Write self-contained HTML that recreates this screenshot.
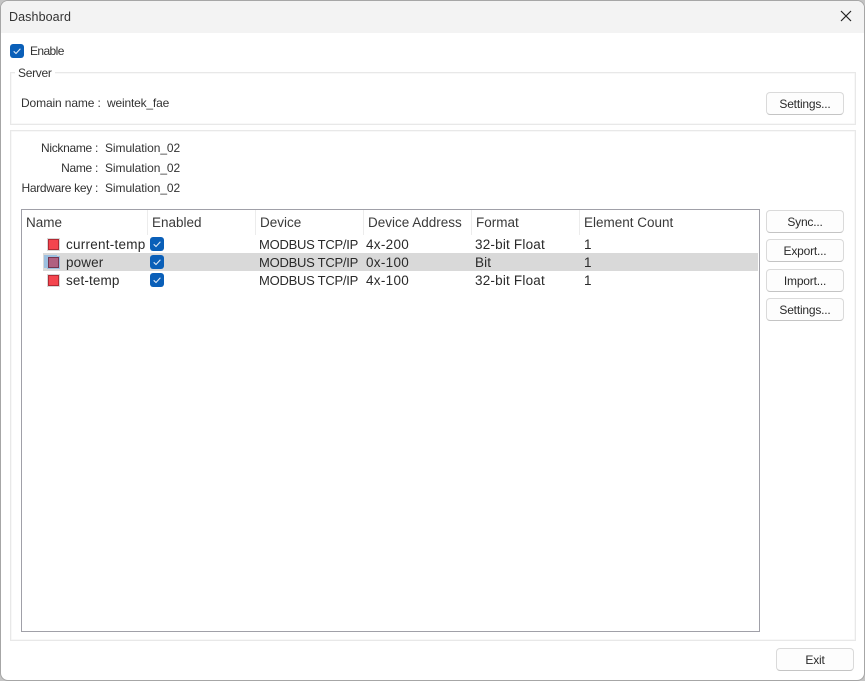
<!DOCTYPE html>
<html><head><meta charset="utf-8"><style>
html,body{margin:0;padding:0;width:865px;height:681px;overflow:hidden;background:#c4c4c4}
body{position:relative;font-family:"Liberation Sans",sans-serif;color:#222}
div,span{position:absolute;box-sizing:border-box}
#win{left:0;top:0;width:865px;height:681px;background:#fff;border:1px solid #a6a6a6;border-radius:8px;overflow:hidden}
#title{left:0;top:0;width:863px;height:32px;background:#f3f3f3}
.t{white-space:nowrap;font-size:12px;line-height:16px;height:16px;color:#333}
.l{letter-spacing:-.3px}
.c{white-space:nowrap;font-size:13.5px;line-height:18px;height:18px;color:#2a2a2a}
.r{letter-spacing:.12px}
.m{font-size:13px;letter-spacing:-.25px}
.h{color:#3a3a3a}
.grp{border:1px solid #e8e8e8;box-shadow:inset 0 0 0 .5px #f2f2f2}
.btn{width:78px;height:23px;background:#fdfdfd;border:1px solid #dadada;border-bottom-color:#c4c4c4;border-radius:4px;font-size:12px;letter-spacing:-.2px;line-height:22px;text-align:center;color:#2a2a2a}
.cb{width:14px;height:14px;background:#0a5fb8;border-radius:3px}
.cb svg{position:absolute;left:0;top:0}
.sep{width:1px;top:210px;height:25px;background:#ececec}
.ic{left:48px;width:11px;height:11px;background:#f4454e;border:1px solid #b02a34;box-shadow:0 0 0 1px #d8d8d8}
</style></head><body>
<div id="win"><div id="title"></div></div>
<div class="t" style="left:9px;top:9px;font-size:12.5px;letter-spacing:.1px">Dashboard</div>
<svg style="position:absolute;left:840px;top:10px" width="12" height="12" viewBox="0 0 12 12"><path d="M1 1L11 11M11 1L1 11" stroke="#222" stroke-width="1.2" fill="none"/></svg>

<div class="cb" style="left:10px;top:44px"><svg width="14" height="14"><path d="M3.7 7.3L6 9.5L10.4 4.8" stroke="#dfeaf7" stroke-width="1.1" fill="none"/></svg></div>
<div class="t" style="left:30px;top:43px;letter-spacing:-.6px">Enable</div>

<div class="grp" style="left:10px;top:72px;width:846px;height:53px"></div>
<div class="t" style="left:15px;top:65px;background:#fff;padding:0 3px;letter-spacing:-.3px">Server</div>
<div class="t" style="left:21px;top:95px;letter-spacing:-.13px">Domain name :</div>
<div class="t" style="left:107px;top:95px;letter-spacing:-.18px">weintek_fae</div>
<div class="btn" style="left:766px;top:92px">Settings...</div>

<div class="grp" style="left:10px;top:130px;width:846px;height:511px"></div>
<div class="t l" style="right:767px;top:140px">Nickname :</div>
<div class="t l" style="right:767px;top:160px">Name :</div>
<div class="t l" style="right:767px;top:180px">Hardware key :</div>
<div class="t" style="left:105px;top:140px;letter-spacing:-.07px">Simulation_02</div>
<div class="t" style="left:105px;top:160px;letter-spacing:-.07px">Simulation_02</div>
<div class="t" style="left:105px;top:180px;letter-spacing:-.07px">Simulation_02</div>

<div style="left:21px;top:209px;width:739px;height:423px;border:1px solid #a0a0a8;background:#fff"></div>
<div style="left:43px;top:253px;width:715px;height:18px;background:#d9d9d9"></div>
<div class="sep" style="left:147px"></div><div class="sep" style="left:255px"></div><div class="sep" style="left:363px"></div><div class="sep" style="left:471px"></div><div class="sep" style="left:579px"></div>

<div class="c h" style="left:26px;top:214px">Name</div>
<div class="c h" style="left:152px;top:214px">Enabled</div>
<div class="c h" style="left:260px;top:214px">Device</div>
<div class="c h" style="left:368px;top:214px">Device Address</div>
<div class="c h" style="left:476px;top:214px">Format</div>
<div class="c h" style="left:584px;top:214px">Element Count</div>

<div class="ic" style="top:239px"></div>
<div class="ic" style="top:257px;background:#b06080;border-color:#74364f;box-shadow:0 0 0 1px #9cc0e0,-3px -1px 0 1px #9cc0e0"></div>
<div class="ic" style="top:275px"></div>

<div class="c" style="left:66px;top:236px;letter-spacing:.25px">current-temp</div>
<div class="c r" style="left:66px;top:254px">power</div>
<div class="c r" style="left:66px;top:272px">set-temp</div>

<div class="cb" style="left:150px;top:237px"><svg width="14" height="14"><path d="M3.7 7.3L6 9.5L10.4 4.8" stroke="#dfeaf7" stroke-width="1.1" fill="none"/></svg></div>
<div class="cb" style="left:150px;top:255px"><svg width="14" height="14"><path d="M3.7 7.3L6 9.5L10.4 4.8" stroke="#dfeaf7" stroke-width="1.1" fill="none"/></svg></div>
<div class="cb" style="left:150px;top:273px"><svg width="14" height="14"><path d="M3.7 7.3L6 9.5L10.4 4.8" stroke="#dfeaf7" stroke-width="1.1" fill="none"/></svg></div>

<div class="c m" style="left:259px;top:236px">MODBUS TCP/IP</div>
<div class="c m" style="left:259px;top:254px">MODBUS TCP/IP</div>
<div class="c m" style="left:259px;top:272px">MODBUS TCP/IP</div>
<div class="c" style="left:366px;top:236px;letter-spacing:.3px">4x-200</div>
<div class="c" style="left:366px;top:254px;letter-spacing:.3px">0x-100</div>
<div class="c" style="left:366px;top:272px;letter-spacing:.3px">4x-100</div>
<div class="c" style="left:475px;top:236px;letter-spacing:.2px">32-bit Float</div>
<div class="c r" style="left:475px;top:254px">Bit</div>
<div class="c" style="left:475px;top:272px;letter-spacing:.2px">32-bit Float</div>
<div class="c" style="left:584px;top:236px">1</div>
<div class="c" style="left:584px;top:254px">1</div>
<div class="c" style="left:584px;top:272px">1</div>

<div class="btn" style="left:766px;top:210px">Sync...</div>
<div class="btn" style="left:766px;top:239px">Export...</div>
<div class="btn" style="left:766px;top:269px">Import...</div>
<div class="btn" style="left:766px;top:298px">Settings...</div>
<div class="btn" style="left:776px;top:648px">Exit</div>
</body></html>
